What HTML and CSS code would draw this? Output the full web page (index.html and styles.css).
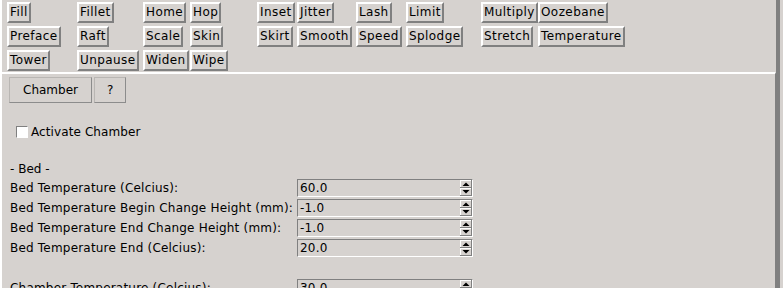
FILE: index.html
```html
<!DOCTYPE html>
<html>
<head>
<meta charset="utf-8">
<link rel="stylesheet" href="styles.css">
</head>
<body>
<div class="win">
  <div class="toolbar">
    <span class="btn">Fill</span><span class="btn">Fillet</span><span class="btn">Home</span><span class="btn">Hop</span><span class="btn">Inset</span><span class="btn">Jitter</span><span class="btn">Lash</span><span class="btn">Limit</span><span class="btn">Multiply</span><span class="btn">Oozebane</span>
    <span class="btn">Preface</span><span class="btn">Raft</span><span class="btn">Scale</span><span class="btn">Skin</span><span class="btn">Skirt</span><span class="btn">Smooth</span><span class="btn">Speed</span><span class="btn">Splodge</span><span class="btn">Stretch</span><span class="btn">Temperature</span>
    <span class="btn">Tower</span><span class="btn">Unpause</span><span class="btn">Widen</span><span class="btn">Wipe</span>
  </div>
  <div class="panel">
    <div class="tabs">
      <span class="tab">Chamber</span><span class="tab">?</span>
    </div>
    <div class="check"><span class="box"></span><span>Activate Chamber</span></div>
    <div class="section">- Bed -</div>
    <div class="form">
      <span class="lbl">Bed Temperature (Celcius):</span>
      <span class="spin"><span class="val">60.0</span><svg class="arrows" width="12" height="16" viewBox="0 0 12 16"><path d="M0 0.5H11.5M0.5 0V7.5M0 8.5H11.5M0.5 8V15.5" stroke="#fff" fill="none"/><path d="M0 7.5H12M11.5 0V8M0 15.5H12M11.5 8V16" stroke="#808080" fill="none"/><polygon points="2.5,6 9.5,6 6,2.5" fill="#000"/><polygon points="2.5,10 9.5,10 6,13.5" fill="#000"/></svg></span>
      <span class="lbl">Bed Temperature Begin Change Height (mm):</span>
      <span class="spin"><span class="val">-1.0</span><svg class="arrows" width="12" height="16" viewBox="0 0 12 16"><path d="M0 0.5H11.5M0.5 0V7.5M0 8.5H11.5M0.5 8V15.5" stroke="#fff" fill="none"/><path d="M0 7.5H12M11.5 0V8M0 15.5H12M11.5 8V16" stroke="#808080" fill="none"/><polygon points="2.5,6 9.5,6 6,2.5" fill="#000"/><polygon points="2.5,10 9.5,10 6,13.5" fill="#000"/></svg></span>
      <span class="lbl">Bed Temperature End Change Height (mm):</span>
      <span class="spin"><span class="val">-1.0</span><svg class="arrows" width="12" height="16" viewBox="0 0 12 16"><path d="M0 0.5H11.5M0.5 0V7.5M0 8.5H11.5M0.5 8V15.5" stroke="#fff" fill="none"/><path d="M0 7.5H12M11.5 0V8M0 15.5H12M11.5 8V16" stroke="#808080" fill="none"/><polygon points="2.5,6 9.5,6 6,2.5" fill="#000"/><polygon points="2.5,10 9.5,10 6,13.5" fill="#000"/></svg></span>
      <span class="lbl">Bed Temperature End (Celcius):</span>
      <span class="spin"><span class="val">20.0</span><svg class="arrows" width="12" height="16" viewBox="0 0 12 16"><path d="M0 0.5H11.5M0.5 0V7.5M0 8.5H11.5M0.5 8V15.5" stroke="#fff" fill="none"/><path d="M0 7.5H12M11.5 0V8M0 15.5H12M11.5 8V16" stroke="#808080" fill="none"/><polygon points="2.5,6 9.5,6 6,2.5" fill="#000"/><polygon points="2.5,10 9.5,10 6,13.5" fill="#000"/></svg></span>
      <span class="blank"></span>
      <span class="lbl">Chamber Temperature (Celcius):</span>
      <span class="spin"><span class="val">30.0</span><svg class="arrows" width="12" height="16" viewBox="0 0 12 16"><path d="M0 0.5H11.5M0.5 0V7.5M0 8.5H11.5M0.5 8V15.5" stroke="#fff" fill="none"/><path d="M0 7.5H12M11.5 0V8M0 15.5H12M11.5 8V16" stroke="#808080" fill="none"/><polygon points="2.5,6 9.5,6 6,2.5" fill="#000"/><polygon points="2.5,10 9.5,10 6,13.5" fill="#000"/></svg></span>
    </div>
  </div>
</div>
</body>
</html>
```

FILE: styles.css
```css
html, body {
  margin: 0;
  padding: 0;
  height: 288px;
  overflow: hidden;
  background: #d6d2cf;
}
body {
  font-family: "DejaVu Sans", sans-serif;
  font-size: 12px;
  color: #000;
}
.win {
  width: 774px;
  height: 288px;
  border-left: 2px solid #fff;
  border-right: 4px solid #808080;
  display: flex;
  flex-direction: column;
}
.toolbar {
  display: grid;
  grid-template-columns: 70px 66px 47px 67px 40px 59px 50px 75px 57px auto;
  grid-auto-rows: 21px;
  row-gap: 3px;
  justify-items: start;
  padding: 2px 0 1px 5px;
}
.btn {
  box-sizing: border-box;
  height: 21px;
  line-height: 15px;
  padding: 1px 1px;
  letter-spacing: 0.42px;
  border-top: 2px solid #fff;
  border-left: 2px solid #fff;
  border-bottom: 2px solid #808080;
  border-right: 2px solid #808080;
  white-space: nowrap;
}
.panel {
  flex: 1;
  border-top: 2px solid #fff;
  border-right: 1px solid #808080;
  padding-left: 7px;
}
.tabs {
  display: flex;
  gap: 2px;
  margin-top: 3px;
}
.tab {
  box-sizing: border-box;
  height: 26px;
  line-height: 24px;
  padding: 0 13px;
  border: 1px solid #8c8c8c;
  border-top-color: #b9b6b3;
  border-left-color: #b9b6b3;
  text-align: center;
}
.tab + .tab {
  padding: 0 12px;
}
.check {
  display: flex;
  align-items: center;
  height: 16px;
  margin-top: 21px;
  padding-left: 7px;
  gap: 3px;
  letter-spacing: 0.1px;
}
.box {
  box-sizing: border-box;
  width: 12px;
  height: 12px;
  background: #fff;
  border-top: 1px solid #808080;
  border-left: 1px solid #808080;
  border-bottom: 1px solid #fff;
  border-right: 1px solid #fff;
}
.section {
  height: 16px;
  line-height: 16px;
  margin-top: 21px;
  padding-left: 1px;
}
.form {
  display: grid;
  grid-template-columns: 288px 176px;
  grid-auto-rows: 18px;
  row-gap: 2px;
  margin-top: 2px;
  align-items: center;
}
.lbl {
  padding-left: 1px;
  white-space: nowrap;
  line-height: 18px;
  letter-spacing: 0.2px;
}
.blank {
  grid-column: 1 / 3;
  height: 16px;
  margin-bottom: -2px;
}
.spin {
  box-sizing: border-box;
  height: 18px;
  display: flex;
  align-items: stretch;
  border-top: 1px solid #808080;
  border-left: 1px solid #808080;
  border-bottom: 1px solid #fff;
  border-right: 1px solid #fff;
}
.val {
  flex: 1;
  padding-left: 2px;
  line-height: 16px;
  letter-spacing: 0.2px;
}
.arrows {
  display: block;
}
```
